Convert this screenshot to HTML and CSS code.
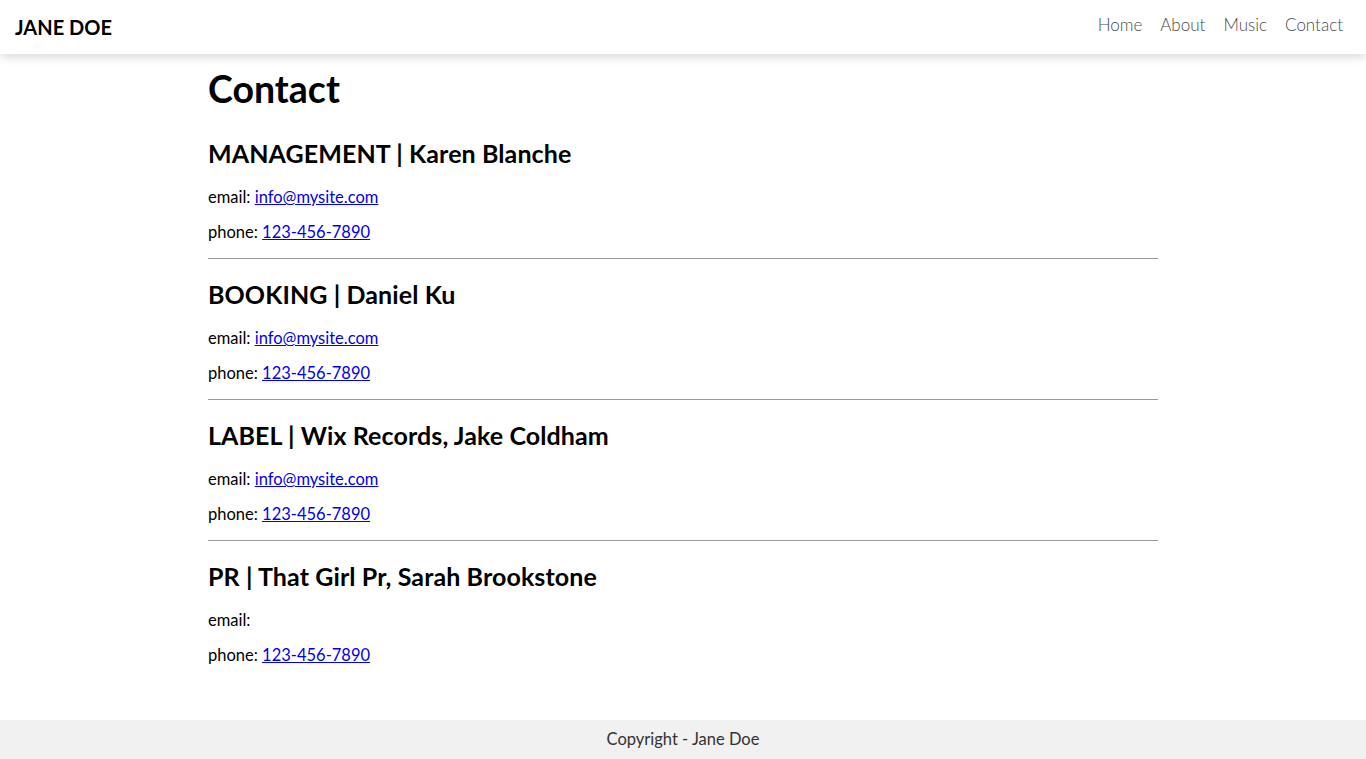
FILE: index.html
```html
<!DOCTYPE html>
<html lang="en">
<head>
<meta charset="utf-8">
<title>Contact - Jane Doe</title>
<link rel="stylesheet" href="styles.css">
</head>
<body>
<header class="topbar">
  <div class="logo">JANE DOE</div>
  <nav class="nav">
    <a href="#">Home</a>
    <a href="#">About</a>
    <a href="#">Music</a>
    <a href="#">Contact</a>
  </nav>
</header>
<main class="content">
  <h1 class="title">Contact</h1>
  <section class="contact">
    <h2>MANAGEMENT | Karen Blanche</h2>
    <p>email: <a href="#">info@mysite.com</a></p>
    <p>phone: <a href="#">123-456-7890</a></p>
  </section>
  <hr class="sep">
  <section class="contact">
    <h2>BOOKING | Daniel Ku</h2>
    <p>email: <a href="#">info@mysite.com</a></p>
    <p>phone: <a href="#">123-456-7890</a></p>
  </section>
  <hr class="sep">
  <section class="contact">
    <h2>LABEL | Wix Records, Jake Coldham</h2>
    <p>email: <a href="#">info@mysite.com</a></p>
    <p>phone: <a href="#">123-456-7890</a></p>
  </section>
  <hr class="sep">
  <section class="contact">
    <h2>PR | That Girl Pr, Sarah Brookstone</h2>
    <p>email:</p>
    <p>phone: <a href="#">123-456-7890</a></p>
  </section>
</main>
<footer class="footer">Copyright - Jane Doe</footer>
</body>
</html>
```
FILE: styles.css
```css
html, body {
  margin: 0;
  padding: 0;
}
body {
  font-family: Lato, "Open Sans", "Liberation Sans", sans-serif;
  color: #000;
  background: #fff;
  min-height: 100vh;
  display: flex;
  flex-direction: column;
}
.topbar {
  height: 54px;
  display: flex;
  align-items: center;
  justify-content: space-between;
  padding: 0 23px 0 15px;
  background: #fff;
  box-shadow: 0 2px 10px rgba(0, 0, 0, 0.18);
  position: relative;
  z-index: 1;
}
.logo {
  font-size: 20px;
  font-weight: 700;
  margin-top: -1px;
}
.nav {
  display: flex;
  gap: 18px;
  margin-top: -6px;
}
.nav a {
  color: #4a4a4a;
  text-decoration: none;
  font-size: 17px;
  font-weight: 300;
}
.content {
  width: 950px;
  margin: 0 auto;
}
.title {
  font-size: 37.5px;
  line-height: 44px;
  font-weight: 700;
  margin: 13px 0 0;
}
.contact h2 {
  font-size: 25px;
  line-height: 30px;
  font-weight: 700;
  margin: 20px 0 12px;
  letter-spacing: 0.1px;
}
.title + .contact h2 {
  margin-top: 27px;
}
.contact p {
  font-size: 16.5px;
  line-height: 35px;
  margin: 0;
}
.sep {
  border: 0;
  border-top: 1px solid #9a9a9a;
  margin: 8px 0 0;
  height: 0;
}
.footer {
  margin-top: auto;
  height: 39px;
  line-height: 38px;
  background: #f1f1f1;
  text-align: center;
  font-size: 16.5px;
  color: #333;
}
```
